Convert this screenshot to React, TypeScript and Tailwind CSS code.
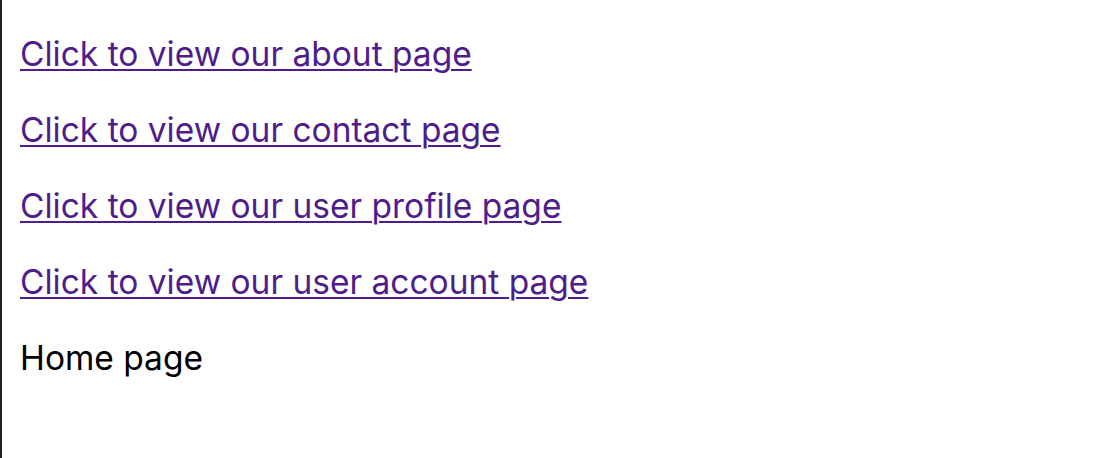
const links = [
  "Click to view our about page",
  "Click to view our contact page",
  "Click to view our user profile page",
  "Click to view our user account page",
];

export default function App() {
  return (
    <div
      className="h-[458px] w-full border-l-2 border-[#1f1f1f] bg-white pl-[18px] pt-[32px]"
      style={{ fontFamily: "Inter, 'Noto Sans', sans-serif" }}
    >
      <div className="flex flex-col gap-[32px] text-[33.5px] leading-[44px]">
        {links.map((label) => (
          <a key={label} href="#" className="w-fit text-[#4e1d8b] underline underline-offset-[3px] decoration-2">
            {label}
          </a>
        ))}
        <p className="text-black">Home page</p>
      </div>
    </div>
  );
}
